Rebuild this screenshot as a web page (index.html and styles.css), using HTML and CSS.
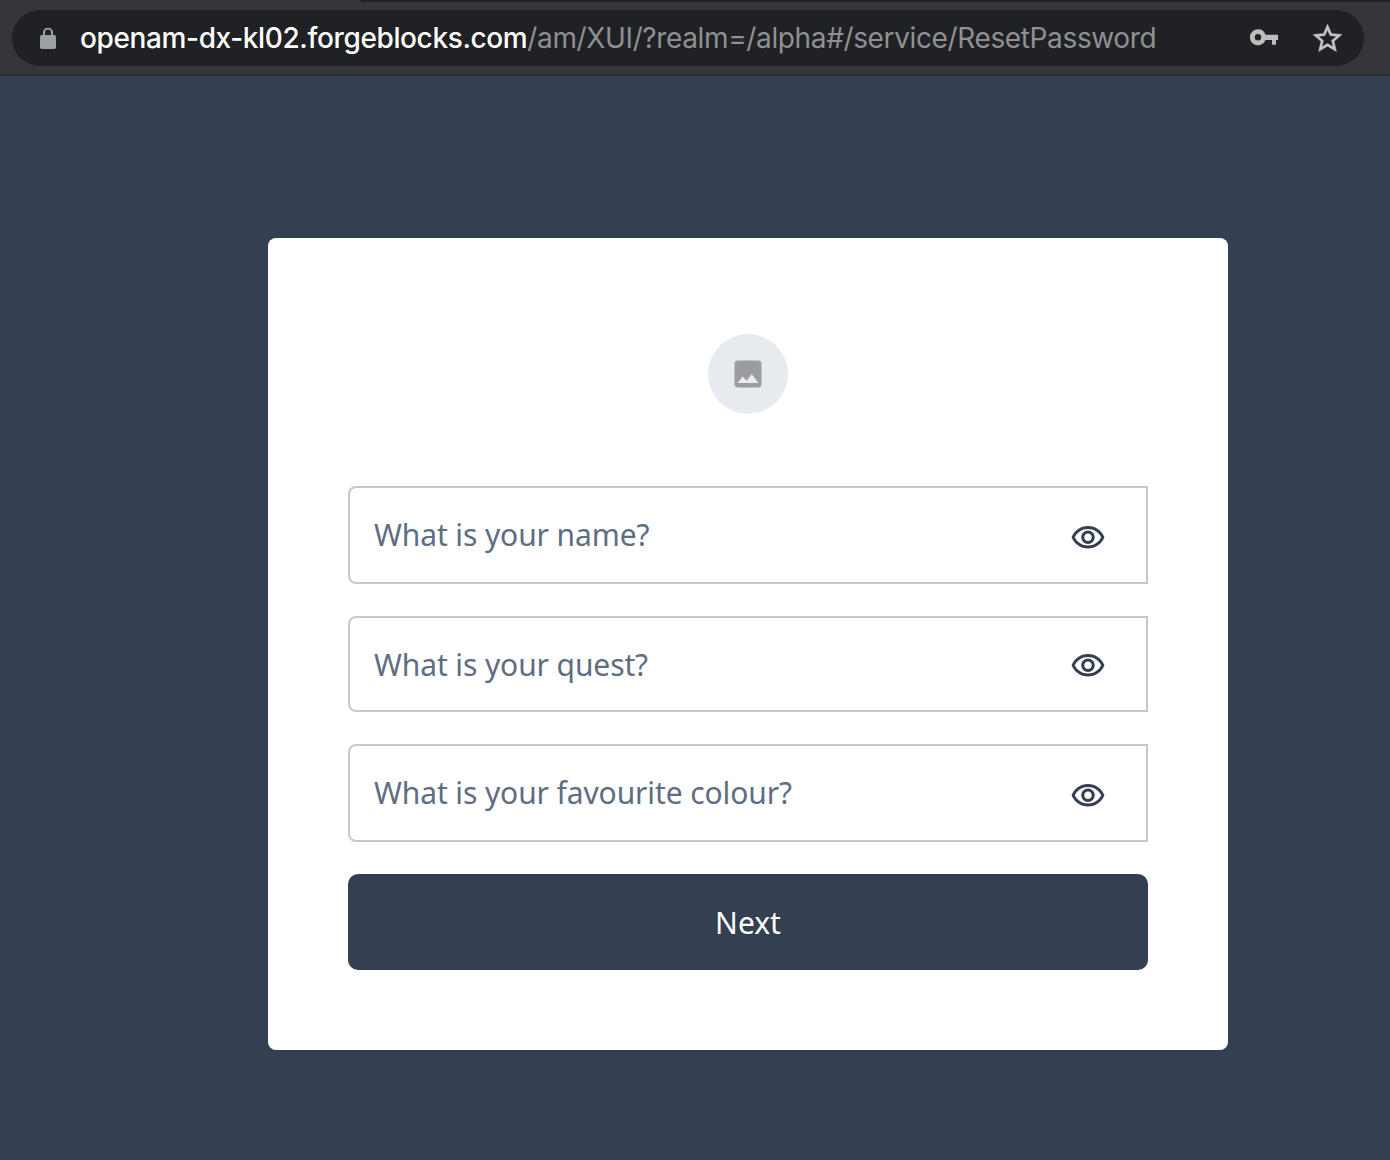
FILE: index.html
```
<!DOCTYPE html>
<html lang="en">
<head>
<meta charset="utf-8">
<title>Reset Password</title>
<link rel="stylesheet" href="styles.css">
</head>
<body>
<header class="toolbar">
  <div class="tab-edge"></div>
  <div class="omnibox">
    <svg class="lock" width="16" height="21" viewBox="0 0 16 21"><path d="M4 9V4.6a4 4 0 0 1 8 0V9" fill="none" stroke="#9aa0a6" stroke-width="2"/><rect y="7" width="16" height="14" rx="1.8" fill="#9aa0a6"/></svg>
    <div class="url"><span class="host">openam-dx-kl02.forgeblocks.com</span><span class="path">/am/XUI/?realm=/alpha#/service/ResetPassword</span></div>
    <svg class="key" width="29" height="17" viewBox="0 0 29 17"><path fill="#bdbdbe" fill-rule="evenodd" d="M8 .3a8 8 0 0 1 7.5 5.4H28V11H26v4.7H22V11H15.5A8 8 0 1 1 8 .3ZM8 5.1a3.2 3.2 0 1 0 0 6.4 3.2 3.2 0 0 0 0-6.4Z"/></svg>
    <svg class="star" width="35" height="35" viewBox="0 0 24 24"><path fill="#c4c4c5" stroke="#c4c4c5" stroke-width=".25" d="M22 9.24l-7.19-.62L12 2 9.19 8.63 2 9.24l5.46 4.73L5.82 21 12 17.27 18.18 21l-1.63-7.03L22 9.24zM12 15.4l-3.76 2.27 1-4.28-3.32-2.88 4.38-.38L12 6.1l1.71 4.04 4.38.38-3.32 2.88 1 4.28L12 15.4z"/></svg>
  </div>
</header>
<main class="page">
  <form class="card">
    <div class="logo">
      <svg width="36" height="36" viewBox="0 0 24 24"><path fill="#9b9ca0" d="M21 19V5c0-1.1-.9-2-2-2H5c-1.1 0-2 .9-2 2v14c0 1.1.9 2 2 2h14c1.1 0 2-.9 2-2zM8.5 13.5l2.5 3.01L14.5 12l4.5 6H5l3.5-4.5z"/></svg>
    </div>
    <div class="field field-tall">
      <span class="label">What is your name?</span>
      <svg class="eye" width="36" height="36" viewBox="0 0 24 24"><path d="M12 6c3.79 0 7.17 2.13 8.82 5.5C19.17 14.87 15.79 17 12 17s-7.17-2.13-8.82-5.5C4.83 8.13 8.21 6 12 6m0-2C7 4 2.73 7.11 1 11.5 2.73 15.89 7 19 12 19s9.27-3.11 11-7.5C21.27 7.11 17 4 12 4zm0 5c1.38 0 2.5 1.12 2.5 2.5S13.38 14 12 14s-2.5-1.12-2.5-2.5S10.62 9 12 9m0-2c-2.48 0-4.5 2.02-4.5 4.5S9.52 16 12 16s4.5-2.02 4.5-4.5S14.48 7 12 7z"/></svg>
    </div>
    <div class="field">
      <span class="label">What is your quest?</span>
      <svg class="eye" width="36" height="36" viewBox="0 0 24 24"><path d="M12 6c3.79 0 7.17 2.13 8.82 5.5C19.17 14.87 15.79 17 12 17s-7.17-2.13-8.82-5.5C4.83 8.13 8.21 6 12 6m0-2C7 4 2.73 7.11 1 11.5 2.73 15.89 7 19 12 19s9.27-3.11 11-7.5C21.27 7.11 17 4 12 4zm0 5c1.38 0 2.5 1.12 2.5 2.5S13.38 14 12 14s-2.5-1.12-2.5-2.5S10.62 9 12 9m0-2c-2.48 0-4.5 2.02-4.5 4.5S9.52 16 12 16s4.5-2.02 4.5-4.5S14.48 7 12 7z"/></svg>
    </div>
    <div class="field field-tall">
      <span class="label">What is your favourite colour?</span>
      <svg class="eye" width="36" height="36" viewBox="0 0 24 24"><path d="M12 6c3.79 0 7.17 2.13 8.82 5.5C19.17 14.87 15.79 17 12 17s-7.17-2.13-8.82-5.5C4.83 8.13 8.21 6 12 6m0-2C7 4 2.73 7.11 1 11.5 2.73 15.89 7 19 12 19s9.27-3.11 11-7.5C21.27 7.11 17 4 12 4zm0 5c1.38 0 2.5 1.12 2.5 2.5S13.38 14 12 14s-2.5-1.12-2.5-2.5S10.62 9 12 9m0-2c-2.48 0-4.5 2.02-4.5 4.5S9.52 16 12 16s4.5-2.02 4.5-4.5S14.48 7 12 7z"/></svg>
    </div>
    <button class="next" type="button">Next</button>
  </form>
</main>
</body>
</html>
```
FILE: styles.css
```
* { box-sizing: border-box; }
body {
  margin: 0;
  height: 1160px;
  overflow: hidden;
  background: #344051;
  font-family: "Noto Sans", sans-serif;
}
svg { display: block; flex: none; }
.toolbar {
  height: 76px;
  background: #35363a;
  border-bottom: 2px solid #28292b;
}
.tab-edge {
  height: 2px;
  margin-left: 360px;
  background: #202124;
  border-bottom-left-radius: 4px 2px;
}
.omnibox {
  display: flex;
  align-items: center;
  width: 1352px;
  height: 56px;
  margin: 8px 0 0 12px;
  padding: 0 19px 0 28px;
  border-radius: 28px;
  background: #202124;
}
.url {
  flex: 1;
  margin-left: 24px;
  padding-top: 1px;
  font: 28px/55px Inter, sans-serif;
  letter-spacing: -0.37px;
  white-space: nowrap;
  color: #8f9092;
}
.host {
  font-weight: 500;
  letter-spacing: -0.37px;
  color: #fff;
}
.key { margin-right: 31px; margin-bottom: 2px; }
.star { margin-top: 1px; }
.page { padding: 162px 0 0 268px; }
.card {
  display: flex;
  flex-direction: column;
  width: 960px;
  height: 812px;
  padding: 96px 80px 80px;
  border-radius: 8px;
  background: #fff;
}
.logo {
  display: flex;
  align-items: center;
  justify-content: center;
  width: 80px;
  height: 80px;
  margin: 0 auto 72px;
  border-radius: 50%;
  background: #e7eaef;
}
.field {
  display: flex;
  align-items: center;
  justify-content: space-between;
  height: 96px;
  margin-bottom: 32px;
  padding: 0 40px 0 24px;
  border: 2px solid #c0c9d5;
  border-radius: 8px 0 0 8px;
}
.field-tall { height: 98px; }
.label {
  padding-top: 2px;
  font-size: 30px;
  line-height: 44px;
  letter-spacing: -0.11px;
  white-space: nowrap;
  color: #5e6d82;
}
.field-tall .label { padding-top: 0; }
.eye { fill: #344051; margin-top: 4px; }
.field-tall .eye { margin-top: 6px; }
.next {
  height: 96px;
  padding: 2px 0 0;
  border: 0;
  border-radius: 10px;
  background: #344051;
  color: #fff;
  font: 30px/44px "Noto Sans", sans-serif;
}
```
